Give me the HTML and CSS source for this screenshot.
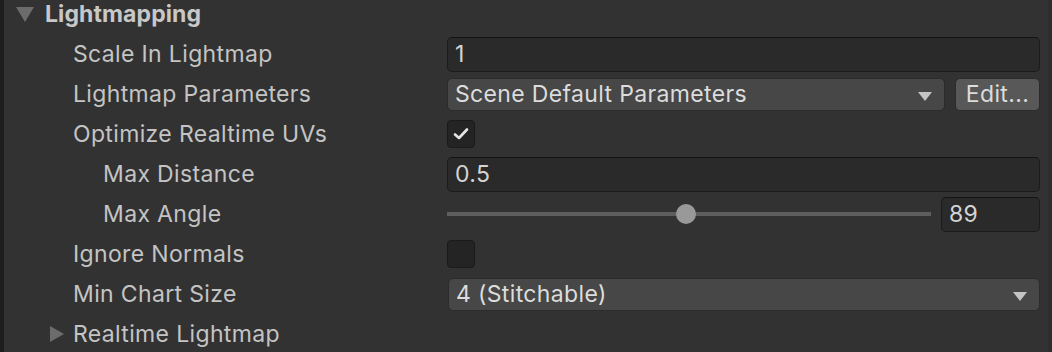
FILE: index.html
```html
<!DOCTYPE html>
<html lang="en">
  <head>
    <meta charset="UTF-8" />
    <title>Lightmapping</title>
    <link rel="stylesheet" href="styles.css">
  </head>
  <body>
    <div class="inspector">
      <div class="foldout-header">
        <span class="arrow-down"></span>
        <span class="foldout-title">Lightmapping</span>
      </div>

      <div class="row">
        <label class="label">Scale In Lightmap</label>
        <div class="field"><div class="text-field">1</div></div>
      </div>

      <div class="row">
        <label class="label">Lightmap Parameters</label>
        <div class="field">
          <div class="dropdown">Scene Default Parameters<span class="dd-arrow"></span></div>
          <button class="edit-btn">Edit...</button>
        </div>
      </div>

      <div class="row">
        <label class="label">Optimize Realtime UVs</label>
        <div class="field">
          <div class="checkbox checked">
            <svg width="18" height="18" viewBox="0 0 18 18"><path d="M3 9.5 L7 13 L15 4.5" fill="none" stroke="#e4e4e4" stroke-width="2.6" stroke-linecap="round" stroke-linejoin="round"/></svg>
          </div>
        </div>
      </div>

      <div class="row">
        <label class="label sub">Max Distance</label>
        <div class="field"><div class="text-field">0.5</div></div>
      </div>

      <div class="row">
        <label class="label sub">Max Angle</label>
        <div class="field">
          <div class="slider">
            <div class="track"></div>
            <div class="thumb"></div>
          </div>
          <div class="text-field num">89</div>
        </div>
      </div>

      <div class="row">
        <label class="label">Ignore Normals</label>
        <div class="field"><div class="checkbox"></div></div>
      </div>

      <div class="row">
        <label class="label">Min Chart Size</label>
        <div class="field">
          <div class="dropdown wide">4 (Stitchable)<span class="dd-arrow"></span></div>
        </div>
      </div>

      <div class="row">
        <div class="label sub-fold"><span class="arrow-right"></span>Realtime Lightmap</div>
      </div>
    </div>
  </body>
</html>
```

FILE: styles.css
```css
html, body {
  margin: 0;
  padding: 0;
  background: #323232;
}
body {
  font-family: Inter, "Noto Sans", sans-serif;
  font-size: 23px;
  letter-spacing: 0.35px;
  color: #c4c4c4;
  width: 1052px;
  height: 352px;
  overflow: hidden;
}
.inspector {
  height: 352px;
  border-left: 4px solid #1e1e1e;
  border-right: 4px solid #2d2d2d;
  box-sizing: border-box;
}
.foldout-header {
  display: flex;
  align-items: center;
  height: 34px;
  box-sizing: border-box;
  padding-bottom: 6px;
  padding-left: 12px;
}
.arrow-down {
  width: 0;
  height: 0;
  border-left: 9px solid transparent;
  border-right: 9px solid transparent;
  border-top: 15px solid #6c6c6c;
  margin-right: 11px;
  margin-top: 1px;
}
.foldout-title {
  font-weight: bold;
  letter-spacing: 0.1px;
  color: #c8c8c8;
}
.row {
  display: flex;
  align-items: center;
  height: 40px;
}
.label {
  width: 374px;
  padding-left: 69px;
  flex: 0 0 auto;
}
.label.sub {
  width: 344px;
  padding-left: 99px;
}
.sub-fold {
  display: flex;
  align-items: center;
  padding-left: 46px;
  width: auto;
}
.arrow-right {
  width: 0;
  height: 0;
  border-top: 8px solid transparent;
  border-bottom: 8px solid transparent;
  border-left: 14px solid #6c6c6c;
  margin-right: 9px;
}
.field {
  flex: 1;
  display: flex;
  align-items: center;
  gap: 10px;
  padding-right: 8px;
}
.text-field {
  flex: 1;
  height: 35px;
  box-sizing: border-box;
  background: #2a2a2a;
  border: 1px solid #1b1b1b;
  border-top-color: #141414;
  border-radius: 5px;
  padding: 0 7px;
  line-height: 33px;
  color: #d4d4d4;
}
.text-field.num {
  flex: 0 0 99px;
  width: 99px;
}
.dropdown {
  flex: 1;
  position: relative;
  height: 33px;
  box-sizing: border-box;
  background: #474747;
  border: 1px solid #2b2b2b;
  border-radius: 5px;
  padding: 0 7px;
  line-height: 31px;
  color: #dcdcdc;
}
.dropdown.wide {
  margin-left: 1px;
}
.dd-arrow {
  position: absolute;
  right: 12px;
  top: 13px;
  width: 0;
  height: 0;
  border-left: 7px solid transparent;
  border-right: 7px solid transparent;
  border-top: 9px solid #c4c4c4;
}
.edit-btn {
  flex: 0 0 85px;
  height: 33px;
  box-sizing: border-box;
  background: #585858;
  border: 1px solid #2b2b2b;
  border-radius: 5px;
  color: #dcdcdc;
  font-family: inherit;
  font-size: 23px;
  letter-spacing: 0.35px;
  padding: 0;
}
.checkbox {
  width: 28px;
  height: 28px;
  box-sizing: border-box;
  background: #242424;
  border: 1px solid #1a1a1a;
  border-radius: 4px;
  display: flex;
  align-items: center;
  justify-content: center;
}
.slider {
  flex: 1;
  position: relative;
  height: 34px;
}
.track {
  position: absolute;
  left: 0;
  right: 0;
  top: 15px;
  height: 4px;
  background: #5e5e5e;
}
.thumb {
  position: absolute;
  left: 229px;
  top: 7px;
  width: 20px;
  height: 20px;
  border-radius: 50%;
  background: #999999;
}
```
